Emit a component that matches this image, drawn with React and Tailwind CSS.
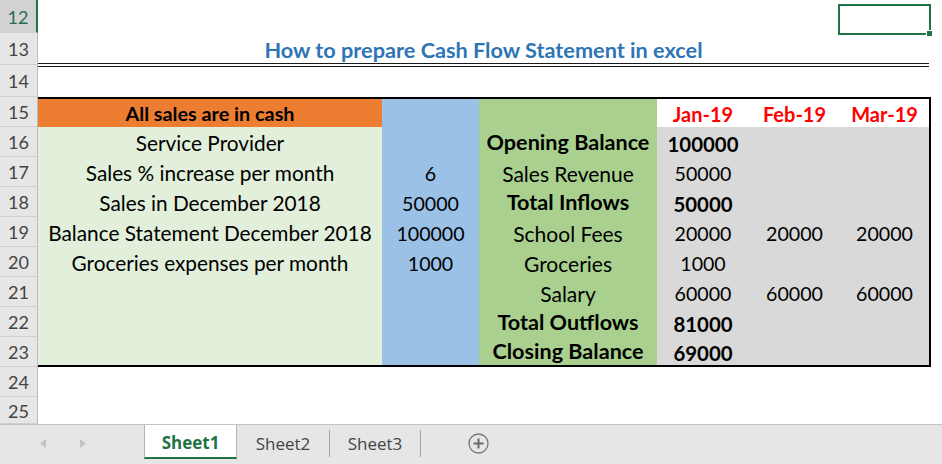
import React from "react";

const headerRows = [
  { n: 12, h: "h-[33px]", sel: true },
  { n: 13, h: "h-[32px]" },
  { n: 14, h: "h-[32px]" },
  { n: 15, h: "h-[30px]" },
  { n: 16, h: "h-[30px]" },
  { n: 17, h: "h-[30px]" },
  { n: 18, h: "h-[30px]" },
  { n: 19, h: "h-[30px]" },
  { n: 20, h: "h-[30px]" },
  { n: 21, h: "h-[30px]" },
  { n: 22, h: "h-[30px]" },
  { n: 23, h: "h-[30px]" },
  { n: 24, h: "h-[30px]" },
  { n: 25, h: "h-[27px]" },
];

const data = [
  ["Service Provider", "", "Opening Balance", "100000", "", "", true],
  ["Sales % increase per month", "6", "Sales Revenue", "50000", "", "", false],
  ["Sales in December 2018", "50000", "Total Inflows", "50000", "", "", true],
  ["Balance Statement December 2018", "100000", "School Fees", "20000", "20000", "20000", false],
  ["Groceries expenses per month", "1000", "Groceries", "1000", "", "", false],
  ["", "", "Salary", "60000", "60000", "60000", false],
  ["", "", "Total Outflows", "81000", "", "", true],
  ["", "", "Closing Balance", "69000", "", "", true],
];

function Row({ r, h, pb }) {
  const [a, b, c, d, e, f, bold] = r;
  const txt = bold ? "font-bold text-[21.6px]" : "font-normal text-[21px]";
  const num = bold ? "font-bold text-[20.4px]" : "font-normal text-[19.6px]";
  return (
    <div className={`flex ${h}`}>
      <div className={`w-[344px] bg-[#e2efda] flex items-end justify-center ${pb} text-[20.8px]`}>{a}</div>
      <div className={`w-[97px] bg-[#9bc2e6] flex items-end justify-center ${pb} text-[19.6px]`}>{b}</div>
      <div className={`w-[178px] bg-[#a9d08e] flex items-end justify-center ${pb} ${txt}`}>{c}</div>
      <div className={`w-[92px] bg-[#d9d9d9] flex items-end justify-center ${pb} ${num}`}>{d}</div>
      <div className={`w-[91px] bg-[#d9d9d9] flex items-end justify-center ${pb} text-[19.6px]`}>{e}</div>
      <div className={`w-[89px] bg-[#d9d9d9] flex items-end justify-center ${pb} text-[19.6px]`}>{f}</div>
    </div>
  );
}

export default function App() {
  return (
    <div className="w-[942px] h-[464px] overflow-hidden bg-white font-['Lato',sans-serif] text-black relative">
      <div className="flex h-[424px]">
        {/* row headers */}
        <div className="w-[38px] shrink-0 bg-[#e6e6e6] border-r border-[#bdbdbd] flex flex-col">
          {headerRows.map((r) => (
            <div
              key={r.n}
              className={`${r.h} shrink-0 border-b border-[#cfcfcf] flex items-center justify-center pt-[2px] text-[18px] ${
                r.sel ? "bg-[#d2d2d2] text-[#2f6b50] border-r-2 border-r-[#217346] -mr-px" : "text-[#444]"
              }`}
            >
              {r.n}
            </div>
          ))}
        </div>
        {/* data area */}
        <div className="flex-1 flex flex-col leading-none">
          <div className="h-[33px] shrink-0" />
          <div className="w-[891px] shrink-0 flex flex-col">
            <div className="h-[30px] flex items-center justify-center pt-[6px] font-bold text-[21.7px] text-[#2e75b6]">
              How to prepare Cash Flow Statement in excel
            </div>
            <div className="h-px bg-[#1a1a1a]" />
            <div className="h-[2px]" />
            <div className="h-px bg-[#1a1a1a]" />
          </div>
          <div className="h-[30px] shrink-0" />
          <div className="w-[893px] shrink-0 border-t-2 border-b-2 border-r-2 border-black">
            <div className="flex h-[28px]">
              <div className="w-[344px] bg-[#ed7d31] flex items-end justify-center pb-[3px] font-bold text-[19.8px]">All sales are in cash</div>
              <div className="w-[97px] bg-[#9bc2e6]" />
              <div className="w-[178px] bg-[#a9d08e]" />
              <div className="w-[92px] bg-white flex items-end justify-center pb-[3px] font-bold text-[20px] text-[#ff0000]">Jan-19</div>
              <div className="w-[91px] bg-white flex items-end justify-center pb-[3px] font-bold text-[20px] text-[#ff0000]">Feb-19</div>
              <div className="w-[89px] bg-white flex items-end justify-center pb-[3px] font-bold text-[20px] text-[#ff0000]">Mar-19</div>
            </div>
            {data.map((r, i) => (
              <Row
                key={i}
                r={r}
                h={i === data.length - 1 ? "h-[28px]" : "h-[30px]"}
                pb={i === data.length - 1 ? "pb-[2px]" : "pb-[3px]"}
              />
            ))}
          </div>
        </div>
      </div>

      {/* selected cell */}
      <div className="absolute left-[838px] top-[4px] w-[93px] h-[31px] border-2 border-[#217346]" />
      <div className="absolute left-[926px] top-[30px] w-[7px] h-[7px] bg-[#217346] border border-white" />

      {/* tab bar */}
      <div className="h-[40px] bg-[#e6e6e6] border-t border-[#c3c3c3] flex items-start font-['Open_Sans',sans-serif] text-[17px]">
        <div className="w-[144px] h-[36px] flex items-center">
          <svg className="ml-[40px]" width="6" height="9" viewBox="0 0 6 9">
            <path d="M6 0 L0 4.5 L6 9 Z" fill="#c4c4c4" />
          </svg>
          <svg className="ml-[34px]" width="6" height="9" viewBox="0 0 6 9">
            <path d="M0 0 L6 4.5 L0 9 Z" fill="#c4c4c4" />
          </svg>
        </div>
        <div className="w-[93px] h-[34px] pt-[3px] bg-white border-x border-[#b5b5b5] border-b-2 border-b-[#217346] flex items-center justify-center font-bold text-[#217346]">
          Sheet1
        </div>
        <div className="w-[92px] h-[34px] pt-[3px] flex items-center justify-center text-[#444]">Sheet2</div>
        <div className="w-px h-[27px] mt-[5px] bg-[#a6a6a6]" />
        <div className="w-[90px] h-[34px] pt-[3px] flex items-center justify-center text-[#444]">Sheet3</div>
        <div className="w-px h-[27px] mt-[5px] bg-[#a6a6a6]" />
        <div className="ml-[47px] h-[37px] flex items-center">
          <svg width="21" height="21" viewBox="0 0 21 21">
            <circle cx="10.5" cy="10.5" r="9.5" fill="none" stroke="#7a7a7a" strokeWidth="1.3" />
            <path d="M10.5 5.5 V15.5 M5.5 10.5 H15.5" stroke="#6a6a6a" strokeWidth="2" />
          </svg>
        </div>
      </div>
    </div>
  );
}
